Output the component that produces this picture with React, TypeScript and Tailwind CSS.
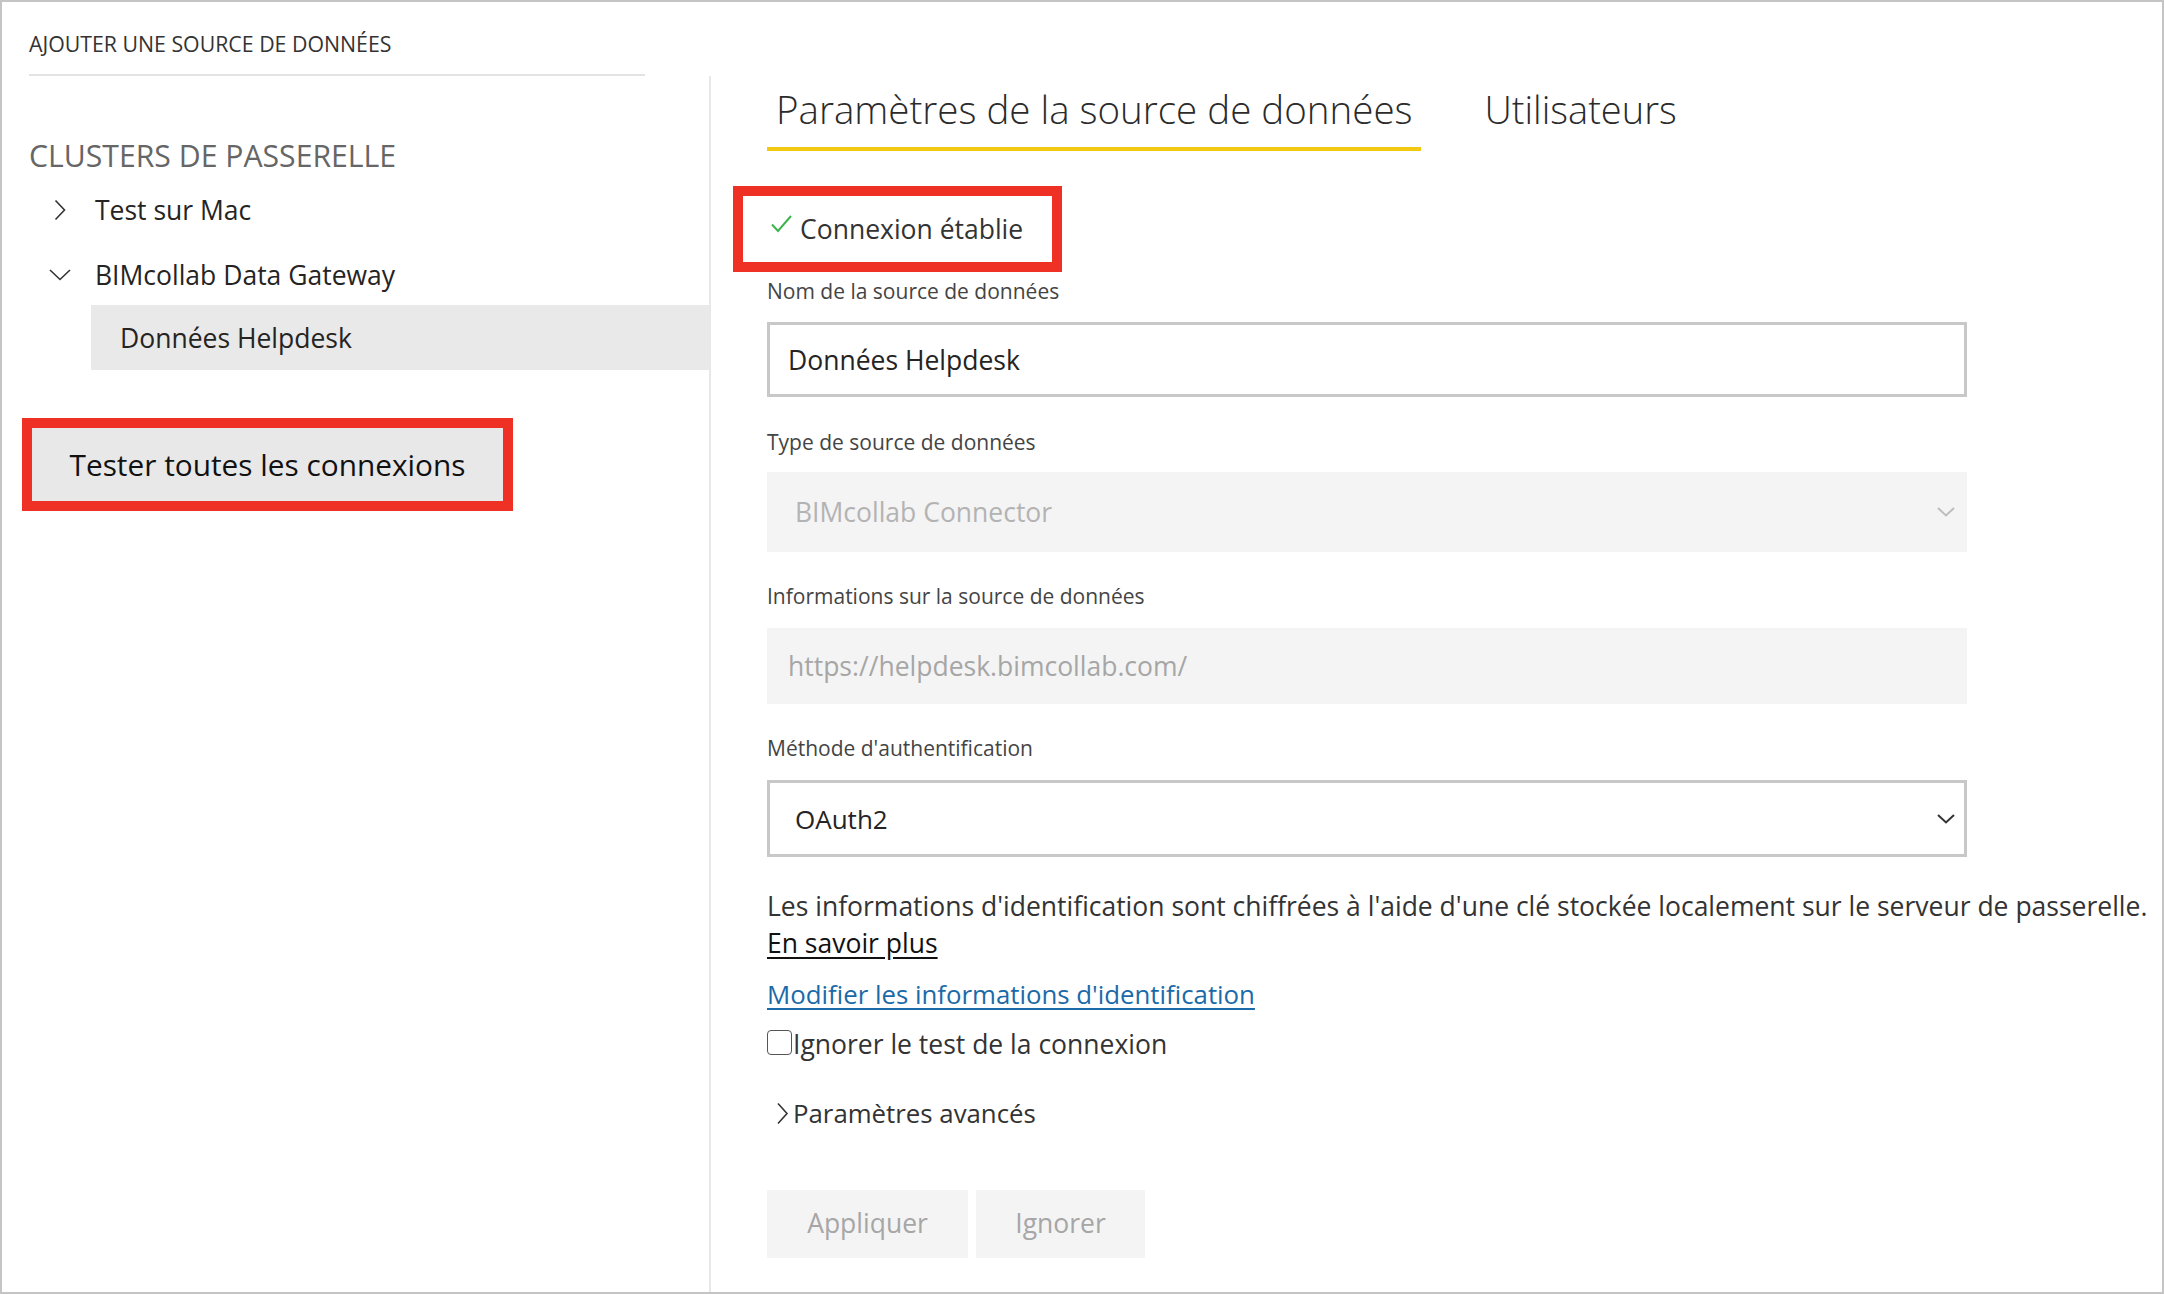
import React from "react";

function ChevronRight({ className = "" }: { className?: string }) {
  return (
    <svg width="12" height="22" viewBox="0 0 12 22" className={className} fill="none">
      <path d="M1.5 1.5 L10.5 11 L1.5 20.5" stroke="currentColor" strokeWidth="1.6" />
    </svg>
  );
}

function ChevronDown({ w = 22, h = 12, sw = 1.6, className = "" }: { w?: number; h?: number; sw?: number; className?: string }) {
  return (
    <svg width={w} height={h} viewBox={`0 0 ${w} ${h}`} className={className} fill="none">
      <path d={`M1 1 L${w / 2} ${h - 1.5} L${w - 1} 1`} stroke="currentColor" strokeWidth={sw} />
    </svg>
  );
}

export default function App() {
  return (
    <div className="w-[2164px] h-[1294px] border-2 border-[#c4c4c4] bg-white flex font-['Open_Sans',sans-serif] text-[#252423] overflow-hidden">
      {/* Left column */}
      <div className="w-[707px] shrink-0 flex flex-col">
        <div className="mt-[28px] ml-[27px] text-[21.3px] leading-[28px] text-[#333]">AJOUTER UNE SOURCE DE DONNÉES</div>
        <div className="mt-[16px] ml-[27px] w-[616px] h-[2px] bg-[#e3e3e3]" />
        <div className="mt-[60px] ml-[27px] text-[30.2px] leading-[40px] text-[#666]">CLUSTERS DE PASSERELLE</div>
        <div className="mt-[16px] pl-[45px] flex items-center h-[36px]">
          <div className="w-[26px] flex justify-center text-[#333]">
            <ChevronRight />
          </div>
          <span className="ml-[22px] text-[26.5px] leading-[36px]">Test sur Mac</span>
        </div>
        <div className="mt-[29px] pl-[45px] flex items-center h-[36px]">
          <div className="w-[26px] flex justify-center text-[#333]">
            <ChevronDown />
          </div>
          <span className="ml-[22px] text-[26.5px] leading-[36px]">BIMcollab Data Gateway</span>
        </div>
        <div className="mt-[12px] ml-[89px] h-[65px] bg-[#e9e9e9] flex items-center pl-[29px]">
          <span className="text-[26.5px] leading-[36px]">Données Helpdesk</span>
        </div>
        <div className="mt-[48px] ml-[20px] w-[491px] h-[93px] border-[10px] border-[#ee3124] bg-[#e8e8e8] flex items-center justify-center">
          <span className="text-[29.8px] leading-[40px] text-[#111]">Tester toutes les connexions</span>
        </div>
      </div>

      {/* Right column */}
      <div className="flex-1 mt-[74px] border-l-2 border-[#e8e8e8] pl-[56px] flex flex-col items-start">
        {/* Tabs */}
        <div className="flex items-start gap-[54px]">
          <div className="flex flex-col">
            <div className="pt-[8px] px-[9px] text-[38.5px] leading-[50px] font-light text-[#2b2b2b] whitespace-nowrap">
              Paramètres de la source de données
            </div>
            <div className="mt-[13px] h-[4px] bg-[#f2c811]" />
          </div>
          <div className="pt-[8px] px-[9px] text-[38px] leading-[50px] font-light text-[#2b2b2b] whitespace-nowrap">Utilisateurs</div>
        </div>

        {/* Status */}
        <div className="mt-[35px] -ml-[34px] w-[329px] h-[86px] border-[10px] border-[#ee3124] flex items-center pl-[28px]">
          <svg width="21" height="18" viewBox="0 0 21 18" fill="none" className="-mt-[10px]">
            <path d="M1 9.5 L7 16 L20 1" stroke="#3cb44b" strokeWidth="2" />
          </svg>
          <span className="ml-[8px] text-[26.5px] leading-[36px] text-[#333]">Connexion établie</span>
        </div>

        <div className="mt-[4px] text-[21px] leading-[30px] text-[#444]">Nom de la source de données</div>
        <div className="mt-[16px] w-[1200px] h-[75px] border-[3px] border-[#c8c8c8] flex items-center pl-[18px]">
          <span className="text-[26.5px] leading-[36px] text-[#252423]">Données Helpdesk</span>
        </div>

        <div className="mt-[30px] text-[21px] leading-[30px] text-[#444]">Type de source de données</div>
        <div className="mt-[15px] w-[1200px] h-[80px] bg-[#f4f4f4] flex items-center pl-[28px] pr-[12px] justify-between">
          <span className="text-[26.5px] leading-[36px] text-[#b3b3b3]">BIMcollab Connector</span>
          <ChevronDown w={18} h={10} sw={2} className="text-[#bdbdbd]" />
        </div>

        <div className="mt-[29px] text-[21px] leading-[30px] text-[#444]">Informations sur la source de données</div>
        <div className="mt-[17px] w-[1200px] h-[76px] bg-[#f4f4f4] flex items-center pl-[21px]">
          <span className="text-[26.5px] leading-[36px] text-[#a6a6a6]">https://helpdesk.bimcollab.com/</span>
        </div>

        <div className="mt-[29px] text-[21px] leading-[30px] text-[#444]">Méthode d'authentification</div>
        <div className="mt-[17px] w-[1200px] h-[77px] border-[3px] border-[#c8c8c8] flex items-center pl-[25px] pr-[9px] justify-between">
          <span className="text-[26px] leading-[36px] text-[#252423]">OAuth2</span>
          <ChevronDown w={18} h={10} sw={2} className="text-[#333]" />
        </div>

        <div className="mt-[31px] text-[26.5px] leading-[37px] text-[#333] whitespace-nowrap">
          Les informations d'identification sont chiffrées à l'aide d'une clé stockée localement sur le serveur de passerelle.
        </div>
        <a className="text-[26.5px] leading-[37px] text-[#111] underline underline-offset-[4px]">En savoir plus</a>

        <a className="mt-[14px] text-[25.8px] leading-[37px] text-[#1b6aa8] underline underline-offset-[4px] decoration-[2px]">
          Modifier les informations d'identification
        </a>

        <div className="mt-[13px] flex items-center h-[37px]">
          <span className="w-[25px] h-[25px] rounded-[4px] border-[1.5px] border-[#555] bg-white -mt-[4px]" />
          <span className="ml-[1px] text-[26.5px] leading-[37px] text-[#333]">Ignorer le test de la connexion</span>
        </div>

        <div className="mt-[32px] flex items-center h-[37px]">
          <svg width="26" height="37" viewBox="0 0 26 37" fill="none" className="text-[#333]">
            <path d="M11 8.5 L20 18.5 L11 28.5" stroke="currentColor" strokeWidth="1.6" />
          </svg>
          <span className="text-[25.8px] leading-[37px] text-[#333]">Paramètres avancés</span>
        </div>

        <div className="mt-[58px] flex gap-[8px]">
          <div className="w-[201px] h-[68px] bg-[#f4f4f4] flex items-center justify-center text-[26.5px] text-[#a6a6a6]">Appliquer</div>
          <div className="w-[169px] h-[68px] bg-[#f4f4f4] flex items-center justify-center text-[26.5px] text-[#a6a6a6]">Ignorer</div>
        </div>
      </div>
    </div>
  );
}
